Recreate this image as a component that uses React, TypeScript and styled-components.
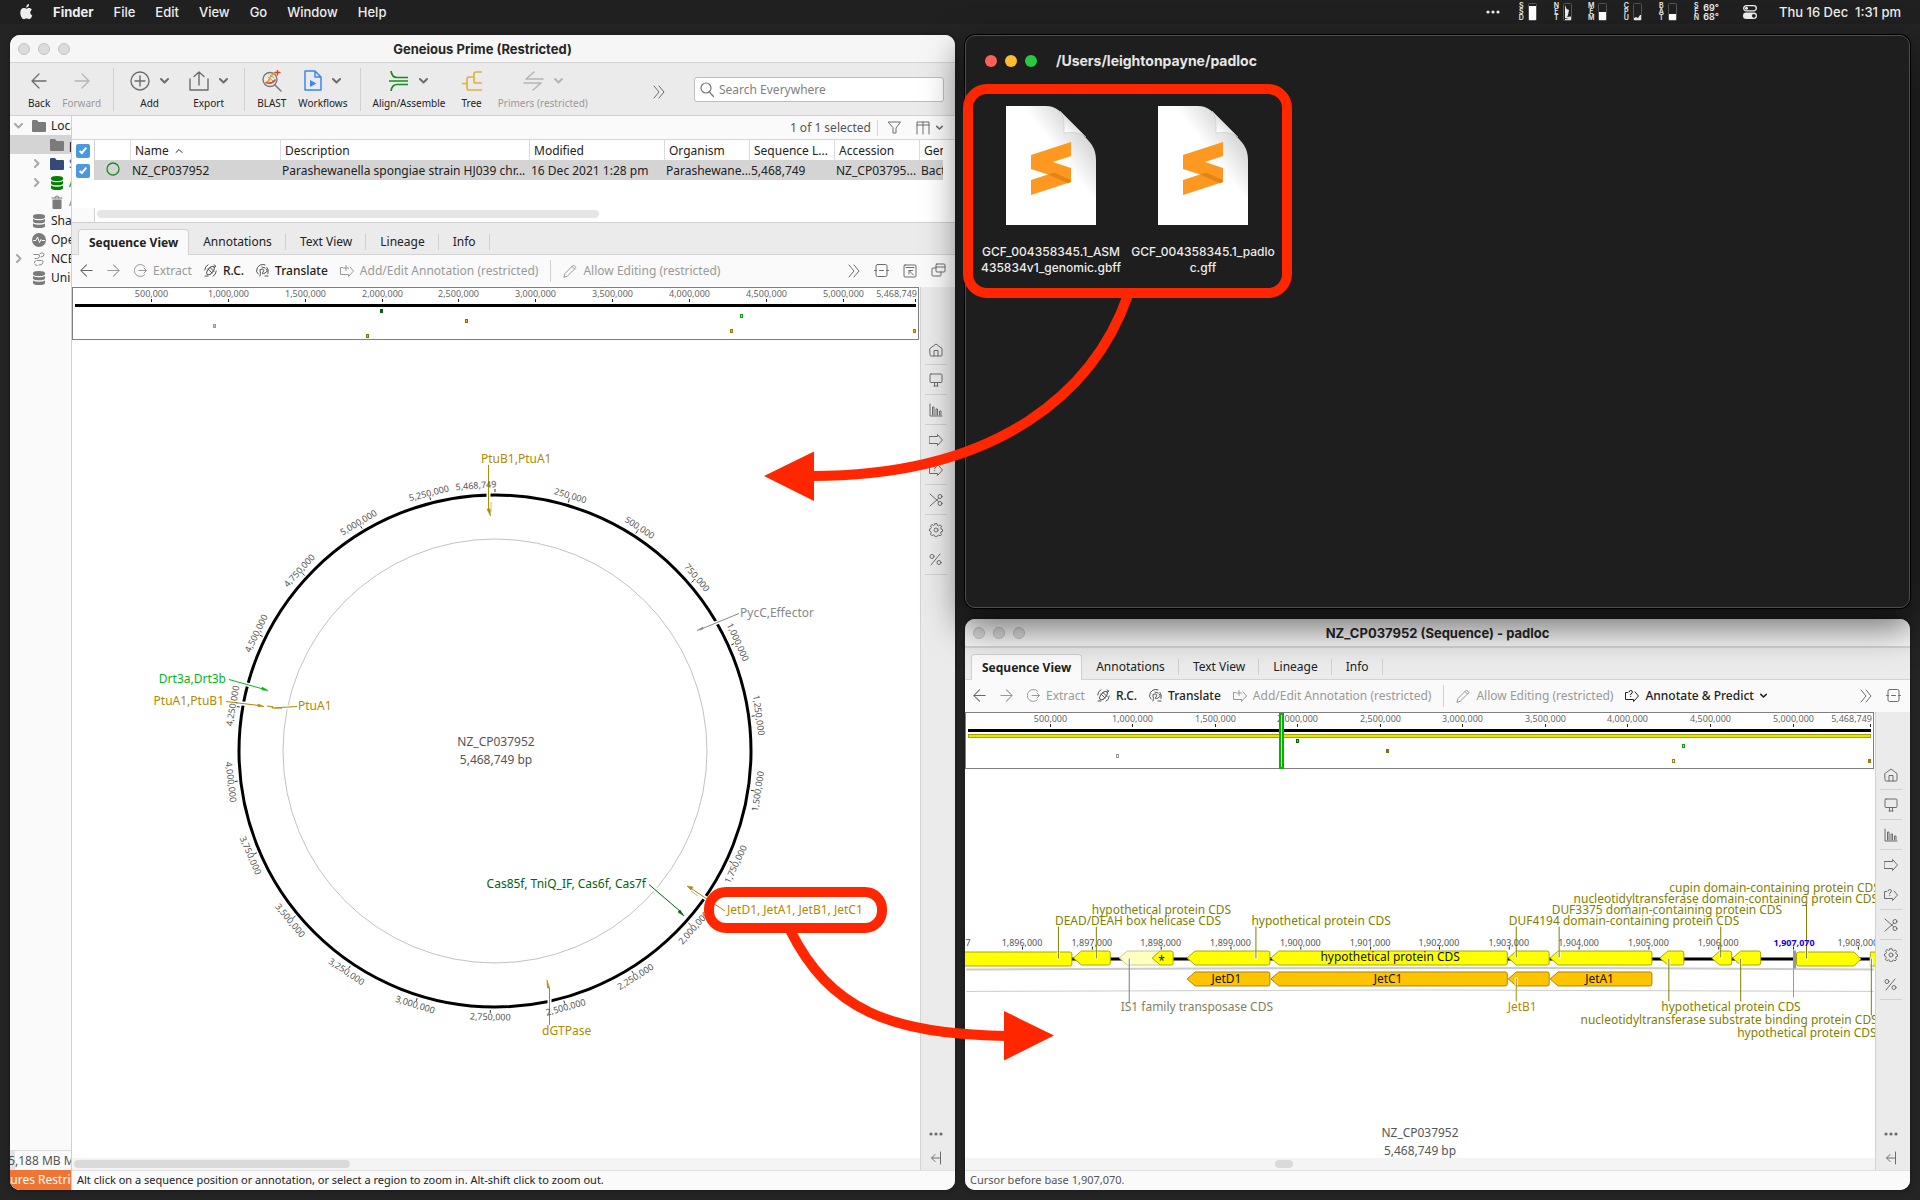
import React from "react";
import styled, { createGlobalStyle, css } from "styled-components";

const UI = `"Noto Sans", "Open Sans", sans-serif`;
const SYS = `Inter, "Liberation Sans", sans-serif`;
const GENOME = 5468749;

const Global = createGlobalStyle`
  *, *::before, *::after { box-sizing: border-box; }
  html, body { margin: 0; height: 100%; background: #242424; }
  body { font-family: ${UI}; font-size: 12px; line-height: 16px; color: #222; overflow: hidden; }
  #root { height: 100%; }
  button { font: inherit; color: inherit; background: none; border: 0; padding: 0; margin: 0; cursor: default; white-space: nowrap; }
`;

/* ---------- desktop ---------- */

const Desktop = styled.div`
  position: relative;
  display: flex;
  flex-direction: column;
  height: 100vh;
  background: #242424;
  overflow: hidden;
`;

const MenuBar = styled.header`
  display: flex;
  align-items: center;
  justify-content: space-between;
  height: 24px;
  flex: none;
  padding: 0 19px 0 20px;
  background: #202020;
  color: #eee;
  font: 500 13px/16px ${SYS};
`;

const MenuSet = styled.nav`
  display: flex;
  align-items: center;
  gap: 20px;
`;

const MenuItem = styled.button<{ $bold?: boolean }>`
  font-weight: ${(p) => (p.$bold ? 700 : 500)};
`;

const StatusSet = styled.div`
  display: flex;
  align-items: center;
  gap: 16px;
`;

const Meter = styled.div`
  display: flex;
  align-items: center;
  gap: 4px;
  font: 600 9px/9px ${SYS};
  svg { display: block; }
`;

const Letters = styled.span`
  display: flex;
  flex-direction: column;
  width: 6px;
  align-items: center;
  font: 600 7px/6px ${SYS};
`;

const Temps = styled.span`
  display: flex;
  flex-direction: column;
`;

const Clock = styled.time`
  white-space: pre;
`;

const ClockSet = styled.div`
  display: flex;
  align-items: center;
  gap: 22px;
  padding-left: 8px;
`;

const Workspace = styled.main`
  flex: 1;
  min-height: 0;
  display: grid;
  grid-template-columns: minmax(0, 1fr) minmax(0, 1fr);
  gap: 10px;
  padding: 11px 10px 10px;
`;

const RightColumn = styled.div`
  display: flex;
  flex-direction: column;
  gap: 11px;
  min-height: 0;
`;

/* ---------- windows ---------- */

const Win = styled.section`
  display: flex;
  flex-direction: column;
  flex: 1;
  min-width: 0;
  min-height: 0;
  overflow: hidden;
  border-radius: 10px;
  background: #fafafa;
  box-shadow: 0 0 6px rgba(0, 0, 0, 0.35);
`;

const FinderWin = styled.section`
  position: relative;
  z-index: 1;
  flex: 1;
  min-height: 0;
  border-radius: 10px;
  border: 1px solid #4d4d4d;
  background: #1e1e1e;
  box-shadow: 0 0 0 1px #000, 0 16px 36px 4px rgba(0, 0, 0, 0.55);
`;

const TitleBar = styled.div<{ $rule: number }>`
  display: grid;
  grid-template-columns: 1fr auto 1fr;
  align-items: center;
  flex: none;
  height: ${(p) => 27 + p.$rule}px;
  padding: 0 8px;
  background: #f6f6f6;
  border-bottom: ${(p) => p.$rule}px solid #d3d3d3;
`;

const Title = styled.h1`
  margin: 0;
  font: 700 13px/16px ${SYS};
  color: #262626;
`;

const Lights = styled.div`
  display: flex;
  gap: 8px;
`;

const Light = styled.button<{ $c?: string }>`
  width: 12px;
  height: 12px;
  border-radius: 50%;
  background: ${(p) => p.$c || "#dcdcdc"};
  border: ${(p) => (p.$c ? "0" : "1px solid #c2c2c2")};
`;

/* ---------- main toolbar ---------- */

const Toolbar = styled.div`
  display: flex;
  align-items: stretch;
  gap: 12px;
  flex: none;
  height: 53px;
  padding: 5px 11px 0 18px;
  background: #ebebeb;
  border-bottom: 1px solid #d3d3d3;
`;

const ToolButton = styled.button<{ $dim?: boolean; $wide?: boolean }>`
  display: flex;
  flex-direction: column;
  align-items: center;
  gap: 3px;
  font-size: 10px;
  line-height: 14px;
  padding: ${(p) => (p.$wide ? "0 4px" : "0")};
  color: ${(p) => (p.$dim ? "#999" : "#222")};
`;

const ToolIcons = styled.span<{ $dim?: boolean }>`
  display: flex;
  align-items: center;
  justify-content: center;
  gap: 10px;
  height: 25px;
  color: ${(p) => (p.$dim ? "#b5b5b5" : "#6c6c6c")};
`;

const Rule = styled.span`
  width: 1px;
  flex: none;
  background: #d0d0d0;
  margin-bottom: 4px;
`;

const Spacer = styled.span`
  flex: 1;
`;

const IconButton = styled.button`
  display: flex;
  align-items: center;
  gap: 6px;
  color: #6c6c6c;
`;

const Search = styled.label`
  display: flex;
  align-items: center;
  align-self: center;
  gap: 5px;
  width: 250px;
  height: 25px;
  margin: 0 0 4px 17px;
  padding: 0 5px;
  border: 1px solid #bdbdbd;
  border-radius: 3px;
  background: #fff;
  color: #777;
  input {
    flex: 1;
    min-width: 0;
    border: 0;
    padding: 0;
    outline: 0;
    background: transparent;
    font: 12px/16px ${UI};
    color: #222;
  }
  input::placeholder { color: #808080; opacity: 1; }
`;

/* ---------- left tree ---------- */

const Split = styled.div`
  display: flex;
  flex: 1;
  min-height: 0;
`;

const Sidebar = styled.aside`
  display: flex;
  flex-direction: column;
  flex: none;
  width: 62px;
  border-right: 1px solid #d0d0d0;
  background: #fafafa;
  overflow: hidden;
`;

const Tree = styled.ul`
  list-style: none;
  margin: 0;
  padding: 0;
  flex: 1;
`;

const TreeRow = styled.li<{ $level: number; $on?: boolean; $c?: string }>`
  display: grid;
  grid-template-columns: 9px 14px auto;
  column-gap: 9px;
  align-items: center;
  height: 19px;
  padding-left: ${(p) => 4 + p.$level * 18}px;
  background: ${(p) => (p.$on ? "#d4d4d4" : "transparent")};
  color: ${(p) => p.$c || "#222"};
  white-space: nowrap;
  overflow: hidden;
`;

const TreeText = styled.span`
  margin-left: -4px;
`;

const SideNote = styled.div<{ $hot?: boolean }>`
  display: flex;
  justify-content: center;
  align-items: center;
  flex: none;
  height: 20px;
  white-space: nowrap;
  overflow: hidden;
  ${(p) =>
    p.$hot
      ? css`background: #ee7534; color: #fff;`
      : css`border-top: 1px solid #dcdcdc; background: linear-gradient(90deg, #e2e2e2 5px, #fafafa 5px); color: #555;`}
`;

/* ---------- document list ---------- */

const Main = styled.div`
  display: flex;
  flex-direction: column;
  flex: 1;
  min-width: 0;
`;

const SelectBar = styled.div`
  display: flex;
  align-items: center;
  justify-content: flex-end;
  gap: 6px;
  flex: none;
  height: 24px;
  padding-right: 12px;
  border-bottom: 1px solid #d6d6d6;
  color: #555;
`;

const BarRule = styled.span`
  width: 1px;
  height: 16px;
  margin-right: 4px;
  background: #d6d6d6;
`;

const FilterButton = styled(IconButton)`
  margin-right: 9px;
`;

const ListPane = styled.div`
  flex: none;
  height: 83px;
  padding-right: 12px;
  background: #fff;
  border-bottom: 1px solid #d0d0d0;
  display: flex;
  flex-direction: column;
  overflow: hidden;
`;

const DocTable = styled.table`
  width: 1000px;
  table-layout: fixed;
  border-collapse: separate;
  border-spacing: 0;
  th, td {
    height: 20px;
    padding: 1px 0 0;
    font-weight: 400;
    text-align: left;
    white-space: nowrap;
    overflow: hidden;
  }
  th { border-right: 1px solid #dcdcdc; padding-left: 4px; }
  td { background: #d4d4d4; padding-left: 1px; }
  th:first-child, td:first-child { background: #fff; border-right: 1px solid #d0d0d0; padding-left: 4px; }
  svg { vertical-align: middle; }
`;

const StatusCell = styled.td`
  && { padding: 0 0 3px 11px; }
`;

const Clip = styled.div`
  overflow: hidden;
  flex: 1;
`;

const Check = styled.input`
  appearance: none;
  display: block;
  width: 14px;
  height: 14px;
  margin: 0;
  border-radius: 2px;
  background: #4a98e0;
  position: relative;
  &::after {
    content: "";
    position: absolute;
    left: 5px;
    top: 2px;
    width: 4px;
    height: 8px;
    border: solid #fff;
    border-width: 0 2px 2px 0;
    transform: rotate(40deg);
  }
`;

const Gutter = styled.div`
  display: flex;
  flex: none;
  height: 14px;
  &::before {
    content: "";
    width: 23px;
    height: 14px;
    background: #fafafa;
    border-right: 1px solid #d0d0d0;
  }
`;

const ListThumb = styled.div`
  width: 502px;
  height: 8px;
  margin: 2px 0 0 2px;
  border-radius: 4px;
  background: #e5e5e5;
`;

/* ---------- viewer ---------- */

const Tabs = styled.div`
  display: flex;
  align-items: flex-end;
  flex: none;
  height: 32px;
  padding-left: 6px;
  background: #ebebeb;
  box-shadow: inset 0 -1px #d3d3d3;
`;

const Tab = styled.button<{ $on?: boolean }>`
  height: 26px;
  ${(p) =>
    p.$on
      ? css`
          padding: 0 10px;
          font-weight: 700;
          background: #fafafa;
          border: 1px solid #d0d0d0;
          border-bottom: 0;
          border-radius: 4px 4px 0 0;
        `
      : css`
          padding: 0 14px;
          background: linear-gradient(#d0d0d0, #d0d0d0) right 5px / 1px 16px no-repeat;
        `}
`;

const SeqBar = styled.div`
  display: flex;
  align-items: center;
  gap: 12px;
  flex: none;
  height: 32px;
  padding: 0 9px 1px 8px;
  background: #fafafa;
`;

const SeqButton = styled.button<{ $dim?: boolean; $arrow?: boolean }>`
  display: flex;
  align-items: center;
  gap: 6px;
  width: ${(p) => (p.$arrow ? "15px" : "auto")};
  color: ${(p) => (p.$dim ? "#999" : p.$arrow ? "#666" : "#222")};
  font-weight: ${(p) => (p.$dim ? 400 : 500)};
`;

const SeqRule = styled.span`
  width: 1px;
  height: 22px;
  background: #d0d0d0;
`;

const EndSet = styled.div`
  display: flex;
  align-items: center;
  gap: 14px;
  margin-left: auto;
`;

const ViewerBody = styled.div`
  display: flex;
  flex: 1;
  min-height: 0;
`;

const ViewerCol = styled.div`
  display: flex;
  flex-direction: column;
  flex: 1;
  min-width: 0;
`;

const OverviewSvg = styled.svg`
  display: block;
  width: 100%;
  flex: none;
  background: #fafafa;
`;

const Canvas = styled.div`
  flex: 1;
  min-height: 0;
  background: #fff;
  svg { display: block; width: 100%; height: 100%; }
`;

const ScrollTrack = styled.div`
  display: flex;
  align-items: center;
  flex: none;
  height: 12px;
  background: #f4f4f4;
`;

const Thumb = styled.div<{ $from: number; $span: number }>`
  margin-left: ${(p) => p.$from}px;
  width: ${(p) => p.$span}px;
  height: 8px;
  border-radius: 4px;
  background: #dadada;
`;

const Strip = styled.div`
  display: flex;
  flex-direction: column;
  align-items: center;
  flex: none;
  width: 35px;
  padding: 48px 5px 0 0;
  border-left: 1px solid #d3d3d3;
  background: #ebebeb;
  color: #6c6c6c;
`;

const StripButton = styled.button<{ $line?: boolean }>`
  display: flex;
  align-items: center;
  justify-content: center;
  width: 22px;
  height: 30px;
  border-bottom: 1px solid ${(p) => (p.$line ? "#d0d0d0" : "transparent")};
`;

const StripEnd = styled.button`
  display: flex;
  align-items: center;
  justify-content: center;
  width: 22px;
  height: 24px;
`;

const Status = styled.footer<{ $c: string }>`
  flex: none;
  height: 20px;
  padding: 1px 5px;
  border-top: 1px solid #e0e0e0;
  background: #fafafa;
  font-size: 11px;
  color: ${(p) => p.$c};
  white-space: nowrap;
  overflow: hidden;
`;

/* ---------- finder ---------- */

const FinderHead = styled.div`
  display: flex;
  align-items: center;
  gap: 19px;
  height: 50px;
  padding: 0 19px;
`;

const FinderTitle = styled.h2`
  margin: 0;
  font: 700 14px/20px ${SYS};
  color: #e6e6e6;
`;

const Files = styled.div`
  display: grid;
  grid-template-columns: repeat(auto-fill, 152px);
  padding: 20px 9px;
`;

const File = styled.figure`
  display: flex;
  flex-direction: column;
  align-items: center;
  gap: 19px;
  margin: 0;
  figcaption {
    width: 148px;
    text-align: center;
    word-break: break-all;
    font: 500 12px/16px ${SYS};
    color: #ececec;
  }
`;

/* ---------- arrows laid over the desktop ---------- */

const Callouts = styled.svg`
  position: absolute;
  inset: 0;
  width: 100%;
  height: 100%;
  z-index: 2;
  pointer-events: none;
`;

/* ---------- icons ---------- */

type IcoProps = { w?: number; h?: number; vb?: string; sw?: number; color?: string; children: React.ReactNode };
const Ico = ({ w = 14, h = w, vb, sw = 1, color, children }: IcoProps) => (
  <svg width={w} height={h} viewBox={vb || `0 0 ${w} ${h}`} fill="none" stroke={color || "currentColor"} strokeWidth={sw} strokeLinecap="round" strokeLinejoin="round" aria-hidden="true">
    {children}
  </svg>
);

const Chevron = ({ s = 9, sw = 2 }: { s?: number; sw?: number }) => (
  <Ico w={s} vb="0 0 9 9" sw={sw}><path d="M1 3l3.5 3.5L8 3" /></Ico>
);
const SideChevron = ({ open }: { open?: boolean }) => (
  <Ico w={9} sw={2} color="#a8a8a8"><path d={open ? "M1 3l3.5 3.5L8 3" : "M3 1l3.5 3.5L3 8"} /></Ico>
);
const Folder = ({ c = "#7b7b7b" }: { c?: string }) => (
  <Ico w={14} h={12}><path d="M0 1q0-1 1-1h4l1.5 2H13q1 0 1 1v8q0 1-1 1H1q-1 0-1-1z" fill={c} stroke="none" /></Ico>
);
const Database = ({ c = "#7b7b7b" }: { c?: string }) => (
  <Ico w={14} h={14}>
    <g fill={c} stroke="none">
      <path d="M1 2q0-2 6-2t6 2v1q0 2-6 2T1 3z" />
      <path d="M1 5q2 1.3 6 1.3T13 5v2.300q0 2-6 2t-6-2z" />
      <path d="M1 9.500q2 1.300 6 1.300t6-1.300V12q0 2-6 2t-6-2z" />
    </g>
  </Ico>
);
const Trash = () => (
  <Ico w={14} h={14}><path d="M2 3h10M5 3q0-2 2-2t2 2" stroke="#7b7b7b" /><path d="M2.500 4.500h9V13q0 1-1 1h-7q-1 0-1-1z" fill="#7b7b7b" stroke="none" /></Ico>
);
const Pulse = () => (
  <Ico w={14}><circle cx="7" cy="7" r="7" fill="#7b7b7b" stroke="none" /><path d="M1.500 7.500h2.300L5.500 4l2 5.500L9 6.500l1 1h2.500" stroke="#fff" /></Ico>
);
const Ncbi = () => (
  <Ico w={14} color="#8a8a8a"><path d="M2 2.500h4q2 0 1.500 2T4.500 6.500H3M8 1.500q4-1.500 4 1t-3 2.500M5 8.500h4.500q2 0 1.500 2t-3 2.500H7M2.500 11q-1-2 1-2M5 13.500q-2 0-2-1" /></Ico>
);
const ArrowL = ({ w = 16 }: { w?: number }) => (
  <Ico w={w} h={w} vb="0 0 16 16" sw={1.3}><path d="M15 8H1M8 1L1 8l7 7" /></Ico>
);
const ArrowR = ({ w = 16 }: { w?: number }) => (
  <Ico w={w} h={w} vb="0 0 16 16" sw={1.3}><path d="M1 8h14M8 1l7 7-7 7" /></Ico>
);
const Plus = () => <Ico w={20} sw={1.4}><circle cx="10" cy="10" r="9" /><path d="M10 5v10M5 10h10" /></Ico>;
const ExportIcon = () => <Ico w={20} sw={1.4}><path d="M1 8v11h18V8M10 14V1M5 5.500L10 1l5 4.500" /></Ico>;
const Blast = () => (
  <Ico w={20} h={22}>
    <circle cx="8" cy="9.500" r="7" stroke="#777" strokeWidth="1.400" />
    <path d="M13 15l6 6" stroke="#777" strokeWidth="1.500" />
    <path d="M8 5l4 3M6 7l5 4M11 4L5 12" stroke="#8a8a8a" strokeWidth=".8" />
    <path d="M4 12.500q6 2 9-2.500" stroke="#e8421c" strokeWidth="1.600" />
    <path d="M12.500 3.500Q8 5 6.500 12" stroke="#f0a020" strokeWidth="1.500" />
    <path d="M15.500 0v5M13 2.500h5" stroke="#e8421c" strokeWidth="1.400" />
  </Ico>
);
const Workflows = () => (
  <Ico w={18} h={21} color="#3a87f0" sw={1.500}><path d="M1 1h10l6 6v13H1zM11 1v6h6" /><path d="M6 10l6.500 3.500L6 17z" fill="#3a87f0" stroke="none" /></Ico>
);
const Align = () => (
  <Ico w={20} color="#14901a" sw={1.700}><path d="M2 0q1 6.500 6 6.500h11M2 20q1-6.500 6-6.500h11M0 10h19" strokeLinecap="butt" /></Ico>
);
const TreeIcon = () => (
  <Ico w={20} color="#e3b13c" sw={1.700}><path d="M0 12.500h5M12 6H7q-2 0-2 2v9q0 2 2 2h13M20 1h-6q-2 0-2 2v7q0 2 2 2h6" strokeLinecap="butt" /></Ico>
);
const Primers = () => <Ico w={21} h={20} sw={1.500}><path d="M11 1L3 8h17M1 12h17l-8 7" /></Ico>;
const More = () => <Ico w={12} h={14}><path d="M1 1l5 6-5 6M6 1l5 6-5 6" /></Ico>;
const Magnify = () => <Ico w={14} h={16} sw={1.2}><circle cx="6" cy="6" r="5" /><path d="M9.500 10l4 4.500" /></Ico>;
const Funnel = () => <Ico w={13}><path d="M.5 1h12L8 7v5H5V7z" /></Ico>;
const Columns = () => <Ico w={14}><path d="M1 13V1h12v12M1 4h12M7 1v12" /></Ico>;
const Extract = () => <Ico w={13}><path d="M10.500 2.200a6 6 0 1 0 0 8.600M5 6.500h7.500M10 4l2.500 2.500L10 9" /></Ico>;
const Revcomp = () => (
  <Ico w={13} color="#555"><path d="M4 .8Q1 2 .7 6M9 12.200q3-1.200 3.300-5.200" /><ellipse cx="6.500" cy="6.500" rx="2.500" ry="5" transform="rotate(40 6.500 6.500)" /><path d="M4 5l4 4M6 3.500l4 4M1 12h3M10 .8l2 1.500-2 1" /></Ico>
);
const TranslateIcon = () => (
  <Ico w={13} color="#555"><path d="M9 .8Q4-.5 1.500 3.500T2 10M4 12q1-3 0-5t2-2 1 3 2 1 1-4M6 3l3 1M9 12h3M11 3.500q2 2 1 6" /></Ico>
);
const Annotate = ({ mark }: { mark: "+" | "?" | "" }) => (
  <Ico w={14} h={12}>
    {mark === "" ? <path d="M.5 2.500h8V.5L13.500 6l-5 5.500v-2h-8z" /> : <path d="M2.500 2.500h-2v7h8v2L13.500 6 10 2" />}
    {mark === "+" && <path d="M6 .5v5M3.500 3h5" />}
    {mark === "?" && <path d="M4 2q0-1.500 1.700-1.500T7.400 2 5.700 4v.8M5.700 6.500v.2" />}
  </Ico>
);
const Pencil = () => <Ico w={14}><path d="M1 13l1-3.500L10.500 1 13 3.500 4.500 12zM9 2.500L11.500 5" /></Ico>;
const Split1 = () => <Ico w={15}><rect x="2" y="1.500" width="11" height="12" rx="1.500" /><path d="M.5 7.500h2M5.500 7.500h4M12.500 7.500h2" /></Ico>;
const Popout = () => <Ico w={14}><rect x="1" y="1" width="12" height="12" rx="1" /><path d="M3 3.500h8M10.500 11L6 6.500M6 10V6.500h3.500" /></Ico>;
const Stack = () => <Ico w={15}><rect x="5" y="1" width="9" height="8" rx="1" /><path d="M5 4h9M5 5H2q-1 0-1 1v6q0 1 1 1h7q1 0 1-1V9" /></Ico>;
const Home = () => <Ico w={14}><path d="M1 5.500L7 1l6 4.500V12q0 1-1 1H2q-1 0-1-1zM5 13V7.500h4V13" /></Ico>;
const Monitor = () => <Ico w={14}><rect x="1" y="1" width="12" height="8.500" rx="1" /><path d="M5 13h4M5.500 10v3M8.500 10v3" /></Ico>;
const Bars = () => <Ico w={14}><path d="M1 1v12h12M3.500 12V4h1.500v8M7 12V6h1.500v6M10.500 12V8H12v4" /></Ico>;
const Cut = () => <Ico w={14}><path d="M1 1l8.500 7.500M1 13l8.500-7.500" /><circle cx="11" cy="3.500" r="2" /><circle cx="11" cy="10.500" r="2" /></Ico>;
const Gear = () => (
  <Ico w={14}><circle cx="7" cy="7" r="2" /><path d="M6 .7h2l.4 1.600 1.300.5 1.500-.9 1.400 1.500-.9 1.400.5 1.300 1.300.4v2l-1.400.3-.5 1.300.9 1.500-1.500 1.300-1.400-.9-1.200.6-.4 1.200H6l-.4-1.500-1.300-.5-1.500.9-1.400-1.500.9-1.400-.5-1.300L.5 8V6l1.400-.4.5-1.300-.9-1.400L3 1.500l1.400.9 1.200-.6z" /></Ico>
);
const Percent = () => <Ico w={13}><circle cx="3" cy="3.500" r="2" /><circle cx="10" cy="9.500" r="2" /><path d="M11 1L2 12" /></Ico>;
const Dots = ({ w = 14 }: { w?: number }) => (
  <Ico w={w} h={4} vb="0 0 14 4"><g fill="currentColor" stroke="none"><circle cx="2" cy="2" r="1.600" /><circle cx="7" cy="2" r="1.600" /><circle cx="12" cy="2" r="1.600" /></g></Ico>
);
const Collapse = () => <Ico w={12} h={14}><path d="M9.500 7H2M5 3.500L1.500 7 5 10.500M10.500 1v12" /></Ico>;

const Apple = () => (
  <svg width="13" height="16" viewBox="0 0 13 16" fill="#eee" aria-hidden="true">
    <path d="M9 0q.2 1.500-.7 2.600T6.200 3.700Q6 2.300 6.900 1.200T9 0z" />
    <path d="M6.500 4.700C5.700 4.700 5 4 3.800 4 1.900 4 .3 5.600.3 8.700c0 3 2 6.500 3.600 6.500 1 0 1.500-.7 2.700-.7s1.600.7 2.600.7c1.300 0 2.500-2 3.100-3.700-1.300-.6-2-1.700-2-3 0-1.200.6-2.100 1.600-2.800C11.200 4.600 10.200 4 9.200 4c-1.200 0-1.900.7-2.700.7z" />
  </svg>
);
const ControlCentre = () => (
  <svg width="14" height="14" viewBox="0 0 14 14" aria-hidden="true">
    <rect x=".7" y=".7" width="12.600" height="5.200" rx="2.600" fill="none" stroke="#eee" strokeWidth="1.300" />
    <circle cx="3.500" cy="3.300" r="1.500" fill="#eee" />
    <rect x="0" y="7.600" width="14" height="6.400" rx="3.200" fill="#eee" />
    <circle cx="10.800" cy="10.800" r="1.900" fill="#202020" />
  </svg>
);

const Gauge = ({ level, d }: { level: number; d?: string }) => (
  <svg width="9" height="18" viewBox="0 0 9 18" aria-hidden="true">
    <rect x=".5" y=".5" width="8" height="17" rx="1" fill="none" stroke="#555" />
    {d ? <path d={d} fill="#eee" /> : <rect x="1" y={17 - level} width="7" height={level} fill="#fff" />}
  </svg>
);

/* ---------- charts ---------- */

type Mark = { x: number; y: number; c: string; f: string };
const GOLD = "#b08a00";

type OverviewProps = { x: number; y: number; w: number; h: number; from: number; span: number; marks: Mark[]; band?: boolean };
const Overview = ({ x, y, w, h, from, span, marks, band }: OverviewProps) => {
  const ticks = Array.from({ length: 10 }, (_, i) => (i + 1) * 500000);
  return (
    <OverviewSvg viewBox={`${x} ${y} ${w} ${h}`} role="img" aria-label="Sequence overview">
      <rect x={x + 0.5} y={y + 0.5} width={w - 2} height={h - 2} fill="#fff" stroke="#808080" />
      <g fontFamily={UI} fontSize="9" fill="#666" textAnchor="middle">
        {ticks.map((t) => {
          const tx = Math.round(from + (t / GENOME) * span);
          return (
            <g key={t}>
              <text x={tx - 0.5} y={y + 10}>{t.toLocaleString("en-US")}</text>
              <rect x={tx - 1} y={y + 12} width="1" height="3" fill="#222" />
            </g>
          );
        })}
        <text x={x + w - 3} y={y + 10} textAnchor="end">5,468,749</text>
        <rect x={from + span - 1} y={y + 12} width="1" height="3" fill="#222" />
      </g>
      <rect x={from} y={y + 17} width={span} height="3" fill="#000" />
      {band && <rect x={from + 0.5} y={y + 22.5} width={span - 1} height="3" fill="#e6e600" stroke="#a3a300" />}
      {marks.map((m) => (
        <rect key={`${m.x}-${m.y}`} x={m.x - 0.5} y={m.y + 0.5} width="2" height="3" fill={m.f} stroke={m.c} />
      ))}
      {band && <path d={`M1280 ${y + 2}v${h - 4}h3v-${h - 4}z`} fill="#fff" fillOpacity=".8" stroke="#00b400" strokeWidth="2" />}
    </OverviewSvg>
  );
};

const CX = 495;
const CY = 751;
const polar = (deg: number, r: number) => {
  const a = (deg * Math.PI) / 180;
  return [CX + r * Math.sin(a), CY - r * Math.cos(a)];
};

const RingLabel = ({ deg, text, tick = deg }: { deg: number; text: string; tick?: number }) => {
  const [tx, ty] = polar(deg, 266);
  const [ax, ay] = polar(tick, 259);
  const [bx, by] = polar(tick, 262);
  const turn = deg > 90 && deg < 270 ? deg - 180 : deg;
  return (
    <g>
      <text x={tx} y={ty} dy="3" transform={`rotate(${turn} ${tx} ${ty})`}>{text}</text>
      <path d={`M${ax} ${ay}L${bx} ${by}`} stroke="#333" />
    </g>
  );
};

type LeadProps = { c: string; d: string; head: string; x: number; y: number; end?: boolean; children: string };
const Lead = ({ c, d, head, x, y, end, children }: LeadProps) => (
  <g>
    <path d={d} stroke="#fff" strokeWidth="4" fill="none" />
    <path d={d} stroke={c} fill="none" />
    <path d={head} fill={c} stroke={c} strokeWidth=".6" />
    <text x={x} y={y} fill={c} textAnchor={end ? "end" : "start"}>{children}</text>
  </g>
);

const CircularMap = () => (
  <svg viewBox="72 341 848 817" fontFamily={UI} fontSize="12" role="img" aria-label="Circular genome map">
    <circle cx={CX} cy={CY} r="256" fill="none" stroke="#000" strokeWidth="3" />
    <circle cx={CX} cy={CY} r="212" fill="none" stroke="#c2c2c2" />
    <Lead c={GOLD} d="M488.500 465V510" head="M487 509h3l.5 7zM491 502v10" x={481} y={463}>PtuB1,PtuA1</Lead>
    <Lead c="#888" d="M739 613.500L700 629.500" head="M703 627l-6 3.500 6-1.500z" x={740} y={617}>PycC,Effector</Lead>
    <Lead c="#00b814" d="M229 679.500L263 689" head="M262 687l6 3.500-6-.5z" x={226} y={683} end>Drt3a,Drt3b</Lead>
    <Lead c={GOLD} d="M226 701.500L259 705.500" head="M258 704l6 2.500-6 0z" x={224} y={705} end>PtuA1,PtuB1</Lead>
    <Lead c={GOLD} d="M297 706.500L272 708" head="M267 706l6 .5v1zM274 708.500h8" x={298} y={710}>PtuA1</Lead>
    <Lead c="#00640a" d="M649 884.500L681 912" head="M680 910l4 6-6-4z" x={646} y={888} end>Cas85f, TniQ_IF, Cas6f, Cas7f</Lead>
    <Lead c={GOLD} d="M725 911L692 889" head="M687 886l6 1-2 3zM691 891l7 5" x={727} y={914}>JetD1, JetA1, JetB1, JetC1</Lead>
    <Lead c={GOLD} d="M549.500 1025V988" head="M547 980l2.500 8h-2z" x={542} y={1035}>dGTPase</Lead>
    <g fontSize="9" fill="#555" textAnchor="middle">
      {Array.from({ length: 21 }, (_, i) => (i + 1) * 250000).map((t) => (
        <RingLabel key={t} deg={(t / GENOME) * 360} text={t.toLocaleString("en-US")} />
      ))}
      <RingLabel deg={355.900} tick={0} text="5,468,749" />
    </g>
    <g fill="#555" textAnchor="middle">
      <text x="496" y="746">NZ_CP037952</text>
      <text x="496" y="764">5,468,749 bp</text>
    </g>
  </svg>
);

const arrowLeft = (a: number, b: number, y: number) =>
  `M${a} ${y + 7}L${a + 8} ${y}H${b - 2}Q${b} ${y} ${b} ${y + 2}V${y + 12}Q${b} ${y + 14} ${b - 2} ${y + 14}H${a + 8}z`;

const Feature = ({ a, b, y = 950.5, f = "#ffff00", s = "#a8a800" }: { a: number; b: number; y?: number; f?: string; s?: string }) => (
  <path d={arrowLeft(a + 0.5, b + 0.5, y)} fill={f} stroke={s} />
);

const trackTicks: [number, string][] = [
  [1021, "1,896,000"], [1091, "1,897,000"], [1160, "1,898,000"], [1230, "1,899,000"], [1300, "1,900,000"],
  [1370, "1,901,000"], [1439, "1,902,000"], [1509, "1,903,000"], [1579, "1,904,000"], [1649, "1,905,000"],
  [1719, "1,906,000"], [1859, "1,908,000"],
];
const OLIVE = "#808000";
const PALE = "#808060";

const trackLeads: [number, number, number, string][] = [
  [1057, 926, 959, OLIVE], [1095, 926, 959, OLIVE], [1255, 926, 959, OLIVE], [1516, 926, 958, OLIVE],
  [1559, 926, 958, OLIVE], [1721, 926, 958, OLIVE], [1807, 904, 959, OLIVE],
  [1128, 1002, 957, PALE], [1669, 1001, 957, OLIVE], [1741, 1001, 957, OLIVE], [1516, 1001, 977, GOLD], [1872, 1015, 957, OLIVE],
];

const LinearMap = () => (
  <svg viewBox="965 769 910 389" fontFamily={UI} fontSize="12" role="img" aria-label="Linear sequence track">
    <path d="M965 969Q1420 966 1875 969" stroke="#ccc" strokeWidth="2" fill="none" />
    <path d="M965 991Q1420 988 1875 991" stroke="#ccc" fill="none" />
    <path d="M965 958.500H1875" stroke="#000" strokeWidth="3" />
    <path d="M960 951.500H1069q2 0 2 2v10q0 2-2 2H960z" fill="#ff0" stroke="#a8a800" />
    <Feature a={1072} b={1109} />
    <Feature a={1118} b={1160} f="#ffffc0" s="#c8c896" />
    <Feature a={1151} b={1172} />
    <Feature a={1186} b={1269} />
    <Feature a={1270} b={1507} />
    <Feature a={1508} b={1549} />
    <Feature a={1550} b={1652} />
    <Feature a={1660} b={1684} />
    <Feature a={1712} b={1732} />
    <Feature a={1733} b={1761} />
    <path d="M1797.500 953.500q0-2 2-2H1855l7 7-7 7H1799.500q-2 0-2-2z" fill="#ff0" stroke="#a8a800" />
    <path d="M1880 951.500H1871.500V965.500H1880z" fill="#ff0" stroke="#a8a800" />
    <Feature a={1186} b={1269} y={971.500} f="#ffc400" s="#b28200" />
    <Feature a={1270} b={1507} y={971.500} f="#ffc400" s="#b28200" />
    <Feature a={1508} b={1549} y={971.500} f="#ffc400" s="#b28200" />
    <Feature a={1550} b={1652} y={971.500} f="#ffc400" s="#b28200" />
    <rect x="1794" y="950" width="3" height="18" fill="#999" />
    <rect x="1794" y="950" width="1" height="47" fill="#999" />
    {trackLeads.map(([x, a, b, c]) => {
      const edge = b > a ? 951 : b === 977 ? 985 : x === 1128 ? 964 : 965;
      return (
        <g key={`${x}-${a}`}>
          <path d={`M${x + 0.5} ${edge}V${b}`} stroke="#fff" strokeWidth="3" />
          <path d={`M${x + 0.5} ${a}V${b - (b > a ? 1 : -1)}`} stroke={c} />
        </g>
      );
    })}
    <g fontSize="9" fill="#555" textAnchor="middle">
      {trackTicks.map(([x, t]) => (
        <g key={t}>
          <text x={x} y="945">{t}</text>
          <rect x={x} y="946" width="1" height="3" fill="#222" />
        </g>
      ))}
      <text x="967" y="945">7</text>
      <text x="1795" y="945" fill="#1400e0" fontWeight="700">1,907,070</text>
      <rect x="1794" y="946" width="1" height="3" fill="#222" />
    </g>
    <g fill="#111" textAnchor="middle">
      <text x="1390" y="961">hypothetical protein CDS</text>
      <text x="1161" y="965">*</text>
      <text x="1226" y="983">JetD1</text>
      <text x="1388" y="983">JetC1</text>
      <text x="1600" y="983">JetA1</text>
    </g>
    <g fill={OLIVE}>
      <text x="1091" y="913">hypothetical protein CDS</text>
      <text x="1054" y="924">DEAD/DEAH box helicase CDS</text>
      <text x="1251" y="924">hypothetical protein CDS</text>
      <text x="1670" y="891">cupin domain-containing protein CDS</text>
      <text x="1574" y="902">nucleotidyltransferase domain-containing protein CDS</text>
      <text x="1552" y="913">DUF3375 domain-containing protein CDS</text>
      <text x="1509" y="924">DUF4194 domain-containing protein CDS</text>
      <text x="1662" y="1011">hypothetical protein CDS</text>
      <text x="1581" y="1024">nucleotidyltransferase substrate binding protein CDS</text>
      <text x="1738" y="1037">hypothetical protein CDS</text>
      <text x="1120" y="1011" fill={PALE}>IS1 family transposase CDS</text>
      <text x="1508" y="1011" fill={GOLD}>JetB1</text>
    </g>
    <g fill="#555" textAnchor="middle">
      <text x="1420" y="1137">NZ_CP037952</text>
      <text x="1420" y="1155">5,468,749 bp</text>
    </g>
  </svg>
);

/* ---------- shared viewer ---------- */

const tabNames = ["Sequence View", "Annotations", "Text View", "Lineage", "Info"];

const stripItems: [string, React.ReactNode, boolean][] = [
  ["General", <Home />, true], ["Display", <Monitor />, true], ["Graphs", <Bars />, true],
  ["Annotations and tracks", <Annotate mark="" />, false], ["Live annotate", <Annotate mark="?" />, true],
  ["Restriction analysis", <Cut />, true], ["Advanced", <Gear />, false], ["Statistics", <Percent />, true],
];

type ViewerProps = { overview: React.ReactNode; map: React.ReactNode; thumb: [number, number]; status: string; statusColor: string; detached?: boolean };
const Viewer = ({ overview, map, thumb, status, statusColor, detached }: ViewerProps) => (
  <>
    <Tabs role="tablist">
      {tabNames.map((n, i) => <Tab key={n} role="tab" aria-selected={i === 0} $on={i === 0}>{n}</Tab>)}
    </Tabs>
    <SeqBar>
      <SeqButton aria-label="Previous" $arrow><ArrowL w={13} /></SeqButton>
      <SeqButton aria-label="Next" $arrow $dim><ArrowR w={13} /></SeqButton>
      <SeqButton $dim><Extract />Extract</SeqButton>
      <SeqButton><Revcomp />R.C.</SeqButton>
      <SeqButton><TranslateIcon />Translate</SeqButton>
      <SeqButton $dim><Annotate mark="+" />Add/Edit Annotation (restricted)</SeqButton>
      <SeqRule />
      <SeqButton $dim><Pencil />Allow Editing (restricted)</SeqButton>
      {detached && <SeqButton><Annotate mark="?" />Annotate &amp; Predict<Chevron s={7} /></SeqButton>}
      <EndSet>
        <IconButton aria-label="More tools"><More /></IconButton>
        <IconButton aria-label="Split view"><Split1 /></IconButton>
        {!detached && <IconButton aria-label="Expand view"><Popout /></IconButton>}
        {!detached && <IconButton aria-label="New window"><Stack /></IconButton>}
      </EndSet>
    </SeqBar>
    <ViewerBody>
      <ViewerCol>
        {overview}
        <Canvas>{map}</Canvas>
        <ScrollTrack><Thumb $from={thumb[0]} $span={thumb[1]} /></ScrollTrack>
      </ViewerCol>
      <Strip>
        {stripItems.map(([n, icon, line]) => <StripButton key={n} aria-label={n} $line={line}>{icon}</StripButton>)}
        <Spacer />
        <StripEnd aria-label="More options"><Dots /></StripEnd>
        <StripEnd aria-label="Collapse options"><Collapse /></StripEnd>
      </Strip>
    </ViewerBody>
    <Status $c={statusColor}>{status}</Status>
  </>
);

const DocIcon = ({ id }: { id: string }) => (
  <svg width="90" height="119" viewBox="0 0 90 119" aria-hidden="true">
    <defs>
      <linearGradient id={`${id}-curl`} x1="0" y1="1" x2="1" y2="0">
        <stop offset=".2" stopColor="#fff" /><stop offset=".6" stopColor="#d8d8d8" />
      </linearGradient>
      <linearGradient id={`${id}-page`} x1="0.300" y1=".6" x2=".9" y2="0">
        <stop offset=".4" stopColor="#fff" /><stop offset=".75" stopColor="#d9d9d9" />
      </linearGradient>
    </defs>
    <path d="M0 0H40C50 0 55 6 60 12L78 30C85 37 90 42 90 54V119H0z" fill={`url(#${id}-page)`} />
    <path d="M54 5C59 12 58 20 58 27C66 26 73 26 80 31z" fill={`url(#${id}-curl)`} stroke="#c4c4c4" strokeWidth=".6" />
    <path d="M25 49L65 36V50L47 56L65 62V76L25 89V74L42 68.500L25 63z" fill="#fe9820" />
    <path d="M42 68.500L48 66.500L65 74V76L62 77.500z" fill="#d97c10" opacity=".7" />
  </svg>
);

const greyDb = <Database />;
const tree: { t: string; level: number; icon: React.ReactNode; open?: boolean; kids?: boolean; on?: boolean; c?: string }[] = [
  { t: "Local", level: 0, icon: <Folder />, open: true, kids: true },
  { t: "p", level: 1, icon: <Folder />, on: true, c: "#000" },
  { t: "S", level: 1, icon: <Folder c="#364a78" />, kids: true, c: "#364a78" },
  { t: "A", level: 1, icon: <Database c="#008000" />, kids: true, c: "#008000" },
  { t: "A", level: 1, icon: <Trash />, c: "#777" },
  { t: "Shared", level: 0, icon: greyDb },
  { t: "Operations", level: 0, icon: <Pulse /> },
  { t: "NCBI", level: 0, icon: <Ncbi />, kids: true },
  { t: "UniProt", level: 0, icon: greyDb },
];

const colWidths = [23, 36, 150, 249, 135, 85, 85, 85, 152];

export default function App() {
  return (
    <>
      <Global />
      <Desktop>
        <MenuBar>
          <MenuSet>
            <Apple />
            <MenuItem $bold>Finder</MenuItem>
            {["File", "Edit", "View", "Go", "Window", "Help"].map((m) => <MenuItem key={m}>{m}</MenuItem>)}
          </MenuSet>
          <StatusSet>
            <Dots w={18} />
            <Meter><Letters><span>S</span><span>S</span><span>D</span></Letters><Gauge level={14} /></Meter>
            <Meter><Letters><span>N</span><span>E</span><span>T</span></Letters><Gauge level={0} d="M2 2l1.500 4L6 7l-1 5-1 2 4-.500V17H2v-1l4-1-4 0z" /></Meter>
            <Meter><Letters><span>M</span><span>E</span><span>M</span></Letters><Gauge level={8} /></Meter>
            <Meter><Letters><span>C</span><span>P</span><span>U</span></Letters><Gauge level={0} d="M1 17v-2l2-1 2 1 2-3 1 0v5z" /></Meter>
            <Meter><Letters><span>B</span><span>A</span><span>T</span></Letters><Gauge level={6} /></Meter>
            <Meter><Letters><span>S</span><span>E</span><span>N</span></Letters><Temps><span>69°</span><span>68°</span></Temps></Meter>
            <ClockSet>
              <ControlCentre />
              <Clock>Thu 16 Dec  1:31 pm</Clock>
            </ClockSet>
          </StatusSet>
        </MenuBar>

        <Workspace>
          <Win>
            <TitleBar $rule={1}>
              <Lights>
                <Light aria-label="Close" /><Light aria-label="Minimise" /><Light aria-label="Zoom" />
              </Lights>
              <Title>Geneious Prime (Restricted)</Title>
            </TitleBar>
            <Toolbar>
              <ToolButton><ToolIcons><ArrowL /></ToolIcons>Back</ToolButton>
              <ToolButton $dim><ToolIcons $dim><ArrowR /></ToolIcons>Forward</ToolButton>
              <Rule />
              <ToolButton $wide><ToolIcons><Plus /><Chevron /></ToolIcons>Add</ToolButton>
              <ToolButton $wide><ToolIcons><ExportIcon /><Chevron /></ToolIcons>Export</ToolButton>
              <Rule />
              <ToolButton><ToolIcons><Blast /></ToolIcons>BLAST</ToolButton>
              <ToolButton><ToolIcons><Workflows /><Chevron /></ToolIcons>Workflows</ToolButton>
              <Rule />
              <ToolButton><ToolIcons><Align /><Chevron /></ToolIcons>Align/Assemble</ToolButton>
              <ToolButton $wide><ToolIcons><TreeIcon /></ToolIcons>Tree</ToolButton>
              <ToolButton $dim><ToolIcons $dim><Primers /><Chevron /></ToolIcons>Primers (restricted)</ToolButton>
              <Spacer />
              <IconButton aria-label="More toolbar items"><More /></IconButton>
              <Search>
                <Magnify />
                <input type="text" placeholder="Search Everywhere" aria-label="Search Everywhere" />
              </Search>
            </Toolbar>
            <Split>
              <Sidebar>
                <Tree>
                  {tree.map((r, i) => (
                    <TreeRow key={i} $level={r.level} $on={r.on} $c={r.c}>
                      {r.kids ? <SideChevron open={r.open} /> : <span />}
                      {r.icon}
                      <TreeText>{r.t}</TreeText>
                    </TreeRow>
                  ))}
                </Tree>
                <SideNote>1075 / 5,188 MB Memory</SideNote>
                <SideNote $hot>Features Restricted</SideNote>
              </Sidebar>
              <Main>
                <SelectBar>
                  <span>1 of 1 selected</span>
                  <BarRule />
                  <FilterButton aria-label="Filter"><Funnel /></FilterButton>
                  <IconButton aria-label="Choose columns"><Columns /><Chevron s={7} /></IconButton>
                </SelectBar>
                <ListPane>
                  <Clip>
                    <DocTable>
                      <colgroup>{colWidths.map((w, i) => <col key={i} style={{ width: w }} />)}</colgroup>
                      <thead>
                        <tr>
                          <th><Check type="checkbox" defaultChecked aria-label="Select all" /></th>
                          <th aria-label="Status" />
                          <th>Name&nbsp; <Ico w={8}><path d="M1 5.500l3-3 3 3" /></Ico></th>
                          <th>Description</th><th>Modified</th><th>Organism</th><th>Sequence L...</th><th>Accession</th><th>Genetic Code</th>
                        </tr>
                      </thead>
                      <tbody>
                        <tr>
                          <td><Check type="checkbox" defaultChecked aria-label="Select NZ_CP037952" /></td>
                          <StatusCell><Ico w={14} color="#1c8c22" sw={1.300}><circle cx="7" cy="7" r="6" /></Ico></StatusCell>
                          <td>NZ_CP037952</td>
                          <td>Parashewanella spongiae strain HJ039 chr...</td>
                          <td>16 Dec 2021 1:28 pm</td>
                          <td>Parashewane...</td>
                          <td>5,468,749</td>
                          <td>NZ_CP03795...</td>
                          <td>Bacterial</td>
                        </tr>
                      </tbody>
                    </DocTable>
                  </Clip>
                  <Gutter><ListThumb /></Gutter>
                </ListPane>
                <Viewer
                  overview={
                    <Overview x={72} y={287} w={848} h={54} from={75} span={841} marks={[
                      { x: 381, y: 309, c: "#00640a", f: "#00640a" },
                      { x: 466, y: 319, c: "#8a6d00", f: "#e8b800" },
                      { x: 214, y: 324, c: "#999", f: "#ccc" },
                      { x: 367, y: 334, c: "#8a6d00", f: "#e8b800" },
                      { x: 741, y: 314, c: "#00a814", f: "#8f8" },
                      { x: 731, y: 329, c: "#a07d00", f: "#e8b800" },
                      { x: 914, y: 329, c: "#a07d00", f: "#e8b800" },
                    ]} />
                  }
                  map={<CircularMap />}
                  thumb={[2, 276]}
                  status="Alt click on a sequence position or annotation, or select a region to zoom in. Alt-shift click to zoom out."
                  statusColor="#222"
                />
              </Main>
            </Split>
          </Win>

          <RightColumn>
            <FinderWin>
              <FinderHead>
                <Lights>
                  <Light $c="#ff5f57" aria-label="Close" /><Light $c="#febc2e" aria-label="Minimise" /><Light $c="#28c840" aria-label="Zoom" />
                </Lights>
                <FinderTitle>/Users/leightonpayne/padloc</FinderTitle>
              </FinderHead>
              <Files>
                <File><DocIcon id="gbff" /><figcaption>GCF_004358345.1_ASM<br />435834v1_genomic.gbff</figcaption></File>
                <File><DocIcon id="gff" /><figcaption>GCF_004358345.1_padlo<br />c.gff</figcaption></File>
              </Files>
            </FinderWin>

            <Win>
              <TitleBar $rule={2}>
                <Lights>
                  <Light aria-label="Close" /><Light aria-label="Minimise" /><Light aria-label="Zoom" />
                </Lights>
                <Title>NZ_CP037952 (Sequence) - padloc</Title>
              </TitleBar>
              <Viewer
                detached
                overview={
                  <Overview x={965} y={711} w={910} h={58} from={968} span={903} band marks={[
                    { x: 1297, y: 738, c: "#00640a", f: "#6c6" },
                    { x: 1387, y: 748, c: "#8a6d00", f: "#8a6d00" },
                    { x: 1117, y: 753, c: "#999", f: "#fff" },
                    { x: 1683, y: 743, c: "#00a814", f: "#8f8" },
                    { x: 1673, y: 758, c: "#a07d00", f: "#fff" },
                    { x: 1869, y: 758, c: "#a07d00", f: "#a07d00" },
                  ]} />
                }
                map={<LinearMap />}
                thumb={[310, 18]}
                status="Cursor before base 1,907,070."
                statusColor="#555"
              />
            </Win>
          </RightColumn>
        </Workspace>

        <Callouts viewBox="0 0 1920 1200" fill="none" stroke="#ff2600" strokeWidth="10" aria-hidden="true">
          <rect x="968" y="89" width="319" height="204" rx="19" />
          <path d="M1128 295C1095 390 1000 476 812 476" />
          <path d="M764 476L814 451.500V501z" fill="#ff2600" stroke="none" />
          <rect x="709" y="892" width="173" height="36" rx="17" />
          <path d="M790 930C830 1010 890 1034 1006 1036" />
          <path d="M1054 1035.500L1004 1011V1060.500z" fill="#ff2600" stroke="none" />
        </Callouts>
      </Desktop>
    </>
  );
}
